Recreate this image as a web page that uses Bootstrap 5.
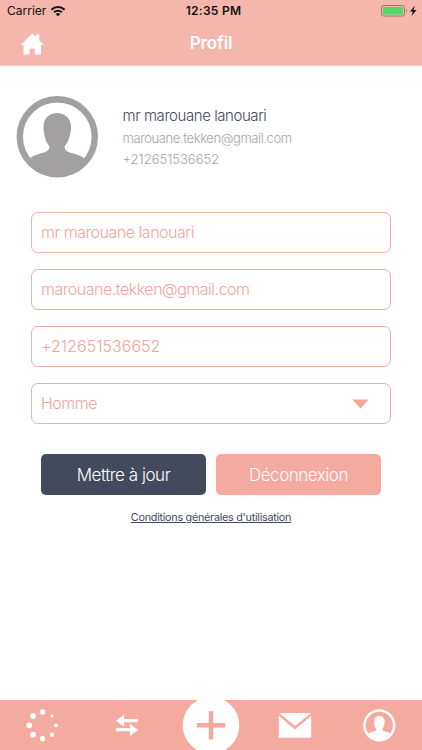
<!DOCTYPE html>
<html lang="fr">
<head>
<meta charset="utf-8">
<meta name="viewport" content="width=device-width, initial-scale=1">
<title>Profil</title>
<link href="https://cdn.jsdelivr.net/npm/bootstrap@5.3.0/dist/css/bootstrap.min.css" rel="stylesheet">
<style>
body{font-family:Inter,"Liberation Sans",sans-serif;height:750px;overflow:hidden;background:#fff;color:#434a5b}
svg{display:block;flex:none}
.top-zone{height:66px;background:#f5b7ac;border-bottom:1px solid #f7d3cc}
.status-line{height:22px;padding:0 5px 0 7px;color:#111;font-size:12px;line-height:22px}
.status-time{font-weight:600;letter-spacing:.28px;padding-left:3px}
.title-line{height:43px;padding:0 20px}
.title-text{font-size:17px;font-weight:600;line-height:43px;letter-spacing:-.1px}
.side{flex:1 1 0}
.person{padding:30px 16px 0;gap:24.5px;height:146px}
.person-name{font-size:15px;font-weight:300;line-height:20px;letter-spacing:-.43px;margin-top:10px}
.person-info{font-size:13px;font-weight:300;line-height:20px;color:#a5a5a5;letter-spacing:-.4px;margin-top:2px}
.person-phone{letter-spacing:0;margin-top:1px}
.fields{padding:0 31px;gap:16px}
.field{height:41px;border:1px solid #f0aea5;border-radius:7px;padding:0 9px;font-size:16px;font-weight:300;line-height:39px;color:#f2a69b;background:#fff;letter-spacing:-.48px}
.field-phone{letter-spacing:.03px}
.actions{padding:30px 41px 0;gap:10px}
.action{height:41px;padding:2px 0 0;border:0;border-radius:5px;font-size:17px;font-weight:300;color:#fff;letter-spacing:-.47px}
.action-dark,.action-dark:hover{background:#424a5b;color:#fff}
.action-pink,.action-pink:hover{background:#f5aa9f;color:#fff}
.terms{font-size:10.8px;line-height:16px;margin-top:15px;color:#434a5b;letter-spacing:-.27px;text-underline-offset:1px;text-decoration-thickness:1px}
.tabs{height:50px;background:#f5aa9f}
</style>
</head>
<body class="d-flex flex-column">
<header class="top-zone">
  <div class="status-line d-flex align-items-center">
    <div class="side d-flex align-items-center"><span>Carrier</span>
      <svg class="ms-1" width="16" height="12" viewBox="0 0 16 12"><g fill="none" stroke="#111" stroke-width="2"><path d="M1.400 4.700a9.400 9.400 0 0 1 13.200 0"/><path d="M4 7.300a5.700 5.700 0 0 1 8 0"/></g><path d="M8 11.400 5.700 9.100a3.300 3.300 0 0 1 4.600 0z" fill="#111"/></svg>
    </div>
    <span class="status-time">12:35 PM</span>
    <div class="side d-flex justify-content-end">
      <svg width="36" height="12" viewBox="0 0 36 12"><rect x=".5" y=".5" width="23" height="10.500" rx="2.200" fill="none" stroke="#99776f"/><rect x="2" y="2" width="20" height="7.500" rx=".8" fill="#4cd964"/><path d="M25 3.700q1.600 2 0 4z" fill="#99776f"/><path d="M33.800.8 29 6.500h2.800l-1.300 4.500L35.500 5h-3z" fill="#111"/></svg>
    </div>
  </div>
  <nav class="title-line d-flex align-items-center text-white">
    <div class="side"><svg width="24" height="22" viewBox="0 0 24 22"><path fill="#fff" d="M12.400.5 16 4V1.500h3.300v5.700L24 12h-3v9.500h-6.200v-5.700H9.700v5.700H3.500V12H.8z"/></svg></div>
    <span class="title-text">Profil</span>
    <div class="side"></div>
  </nav>
</header>
<main class="flex-grow-1">
  <section class="person d-flex">
    <svg width="82" height="82" viewBox="0 0 82 82"><circle cx="41.300" cy="40.800" r="37.500" fill="#fff" stroke="#a2a0a0" stroke-width="6.400"/><path fill="#a2a0a0" d="M14 62.500C17 59 24 58 29.500 56Q33.500 54 33.500 50.500C29.500 46 27.500 38 27.500 31C27.500 22 33.500 17 41 17S55 22 55 31C55 38 52.500 46 48.500 50.500Q48.500 54 52.500 56C58 58 65 59 68 62.500Q57 79 41 79T14 62.500Z"/></svg>
    <div>
      <div class="person-name">mr marouane lanouari</div>
      <div class="person-info">marouane.tekken@gmail.com</div>
      <div class="person-info person-phone">+212651536652</div>
    </div>
  </section>
  <form class="fields d-flex flex-column">
    <div class="field">mr marouane lanouari</div>
    <div class="field">marouane.tekken@gmail.com</div>
    <div class="field field-phone">+212651536652</div>
    <div class="field d-flex align-items-center justify-content-between"><span>Homme</span>
      <svg class="me-2" width="25" height="10" viewBox="0 0 25 10"><path d="M4.500.5h16l-8 9z" fill="#f5a598"/></svg></div>
  </form>
  <div class="actions d-flex">
    <button type="button" class="btn action action-dark flex-fill w-50">Mettre à jour</button>
    <button type="button" class="btn action action-pink flex-fill w-50">Déconnexion</button>
  </div>
  <div class="text-center"><a href="#" class="terms d-inline-block">Conditions générales d'utilisation</a></div>
</main>
<footer class="tabs d-flex">
  <svg width="84" height="50" viewBox="0 0 84 50" fill="#fff"><circle cx="42.500" cy="12" r="2.800"/><circle cx="33" cy="16" r="2.900"/><circle cx="29.200" cy="25.300" r="2.900"/><circle cx="33" cy="34.700" r="2.900"/><circle cx="42.500" cy="38.700" r="2.600"/><circle cx="52" cy="34.700" r="2.200"/><circle cx="56" cy="25.300" r="1.900"/><circle cx="52" cy="16" r="1.500"/></svg>
  <svg width="85" height="50" viewBox="84 0 85 50" fill="#fff"><path d="M116 20.700l8-6v4.300h14v3.200h-14v4.500zM138 29.700l-8-6V28h-14v3.200h14v4.800z"/></svg>
  <svg width="84" height="50" viewBox="169 0 84 50"><circle cx="211" cy="25.300" r="28.300" fill="#fff"/><path d="M211 11.200v28.300M196.800 25.300H225.200" stroke="#f5aa9f" stroke-width="4.500"/></svg>
  <svg width="85" height="50" viewBox="253 0 85 50" fill="#fff"><path d="M279 13h32l-16 13zM278.800 15.800 295 29.500l16.200-13.700V37.800H278.800z"/></svg>
  <svg width="84" height="50" viewBox="338 0 84 50"><circle cx="379.300" cy="25.300" r="14.900" fill="none" stroke="#fff" stroke-width="2.500"/><path fill="#fff" d="M368.500 33.500C370 32 373 31.800 375 31Q376.300 30.300 376.300 29C374.800 27.300 374 24.500 374 21.500C374 18 376.300 16 379.300 16S384.600 18 384.600 21.500C384.600 24.500 383.800 27.300 382.300 29Q382.300 30.300 383.600 31C385.600 31.800 388.600 32 390.100 33.500Q386 39.500 379.300 39.500T368.500 33.500Z"/></svg>
</footer>
<script src="https://cdn.jsdelivr.net/npm/bootstrap@5.3.0/dist/js/bootstrap.bundle.min.js"></script>
</body>
</html>
